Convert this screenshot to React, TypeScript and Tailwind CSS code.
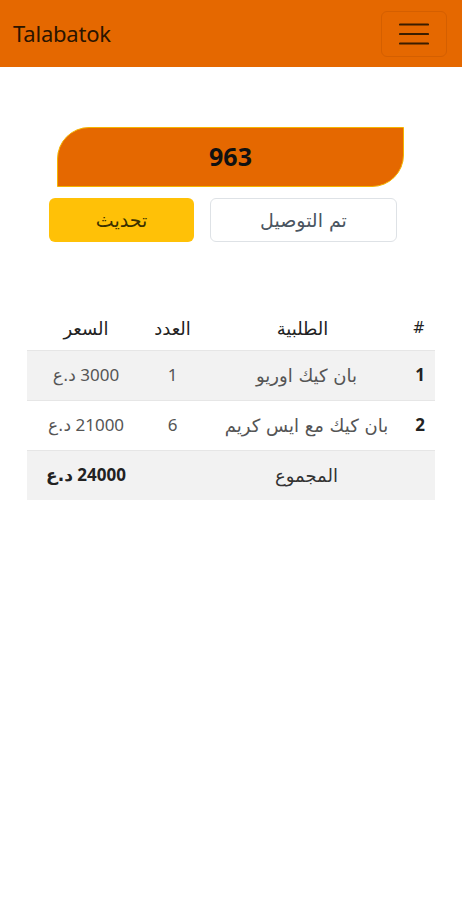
const arabic = { fontFamily: '"DejaVu Sans", sans-serif' };

export default function App() {
  const items = [
    { id: 1, name: 'بان كيك اوريو', qty: 1, price: '3000' },
    { id: 2, name: 'بان كيك مع ايس كريم', qty: 6, price: '21000' },
  ];

  return (
    <div className="min-h-screen bg-white" style={{ fontFamily: '"Noto Sans", "DejaVu Sans", sans-serif' }}>
      {/* Navbar */}
      <nav className="h-[67px] bg-[#e56800] flex items-center justify-between pl-[13px] pr-[15px]">
        <span className="text-[22px] text-[#2b1400] tracking-[-0.2px]">Talabatok</span>
        <button className="w-[66px] h-[46px] rounded-md border border-[#d45f00] flex items-center justify-center">
          <svg width="30" height="24" viewBox="0 0 30 24">
            <path d="M1 2.5h28M1 12h28M1 21.5h28" stroke="#3a1d00" strokeWidth="2.2" strokeLinecap="round" />
          </svg>
        </button>
      </nav>

      <main dir="rtl" className="pt-[60px]">
        {/* Order number */}
        <div className="w-[347px] mr-[58px] h-[60px] bg-[#e56800] border border-[#f5b400] rounded-tl-[32px] rounded-br-[32px] flex items-center justify-center">
          <span className="text-[25px] font-bold text-[#111]">963</span>
        </div>

        {/* Actions */}
        <div className="flex gap-[16px] mt-[11px] pr-[65px]">
          <button style={arabic} className="w-[187px] h-[44px] rounded-md border border-[#dee2e6] bg-white text-[19px] text-[#4a5560]">
            تم التوصيل
          </button>
          <button style={arabic} className="w-[145px] h-[44px] rounded-md bg-[#ffc107] text-[19px] text-[#3a3000]">
            تحديث
          </button>
        </div>

        {/* Table */}
        <table className="mt-[65px] mr-[27px] w-[408px] table-fixed border-collapse text-[17px]">
          <colgroup>
            <col className="w-[30px]" />
            <col className="w-[205px]" />
            <col className="w-[55px]" />
            <col className="w-[118px]" />
          </colgroup>
          <thead>
            <tr className="h-[43px] text-[#222] text-[18px]" style={arabic}>
              <th className="font-normal text-right pr-[10px] text-[15px]">#</th>
              <th className="font-normal text-center">الطلبية</th>
              <th className="font-normal text-center">العدد</th>
              <th className="font-normal text-center">السعر</th>
            </tr>
          </thead>
          <tbody>
            {items.map((item, i) => (
              <tr key={item.id} className={`h-[50px] border-t border-[#e6e6e6] ${i % 2 === 0 ? 'bg-[#f2f2f2]' : 'bg-white'}`}>
                <td className="font-bold text-[#222] text-right pr-[10px]">{item.id}</td>
                <td style={arabic} className="text-center pl-[8px] text-[18px] text-[#555]">{item.name}</td>
                <td className="text-center text-[#555]">{item.qty}</td>
                <td className="text-center text-[#555]">
                  {item.price} <span style={arabic}>د.ع</span>
                </td>
              </tr>
            ))}
            <tr className="h-[50px] border-t border-[#e6e6e6] bg-[#f2f2f2]">
              <td></td>
              <td style={arabic} className="text-center pl-[8px] text-[18px] text-[#333]">المجموع</td>
              <td></td>
              <td className="text-center font-bold text-[#222]">
                24000 <span style={arabic}>د.ع</span>
              </td>
            </tr>
          </tbody>
        </table>
      </main>
    </div>
  );
}
